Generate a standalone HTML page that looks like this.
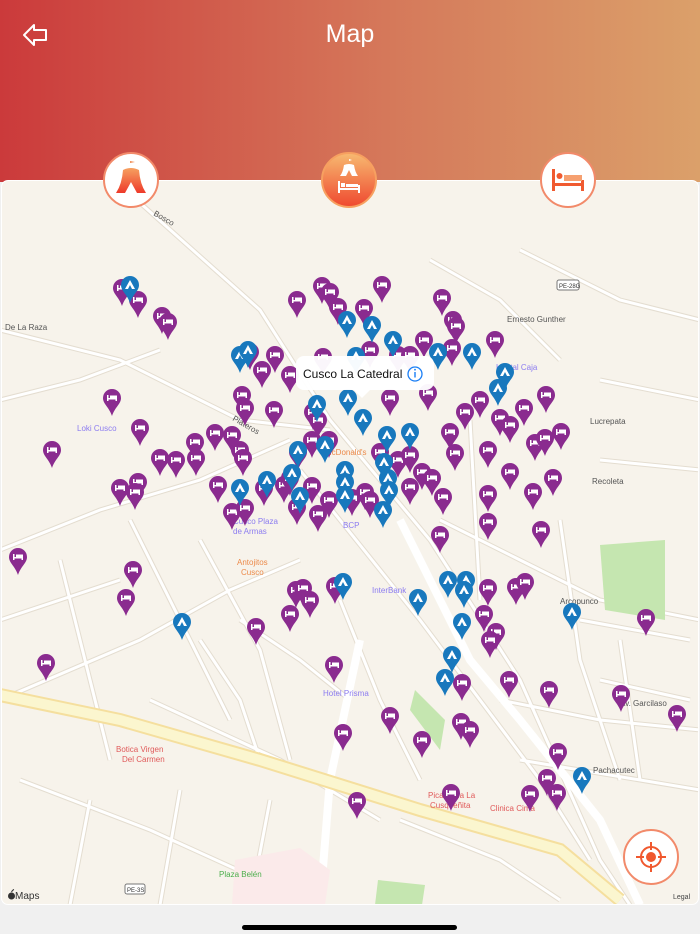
<!DOCTYPE html>
<html><head><meta charset="utf-8"><style>
*{margin:0;padding:0;box-sizing:border-box}
body{width:700px;height:934px;overflow:hidden;background:#f0f0f0;font-family:"Liberation Sans",sans-serif;position:relative}
#hdr{position:absolute;left:0;top:0;width:700px;height:182px;background:linear-gradient(90deg,#cb3a3b,#d5785a 55%,#dba06a)}
#title{position:absolute;top:20px;width:700px;text-align:center;color:#fff;font-size:25px}
#map{position:absolute;left:1px;top:180px;width:698px;height:725px;border-radius:7px;overflow:hidden;background:#f7f3eb;border:1px solid #fff}
.btn{position:absolute;width:56px;height:56px;border-radius:50%;background:#fff;border:2px solid #f28a6a;top:152px}
.home{position:absolute;left:242px;top:925px;width:215px;height:5px;border-radius:3px;background:#000}
</style></head><body>
<div id="hdr">
<svg style="position:absolute;left:22px;top:23px" width="26" height="24" viewBox="0 0 26 24"><path d="M2 12 L12 2 L12 7 L24 7 L24 17 L12 17 L12 22 Z" fill="none" stroke="#fff" stroke-width="2" stroke-linejoin="round"/></svg>
<div id="title">Map</div>
</div>
<div id="map">
<svg width="698" height="725" viewBox="1 180 698 725" style="position:absolute;left:-1px;top:-1px">
<defs>
<g id="pp"><path d="M-9,0 a9,9 0 1,1 18,0 c0,6 -6,9 -9,18 c-3,-9 -9,-12 -9,-18z" fill="#8a2b8f"/><rect x="-5" y="-3" width="1.5" height="6" fill="#fff"/><rect x="-5" y="0" width="10" height="1.5" fill="#fff"/><rect x="-2" y="-2.5" width="7" height="2.5" fill="#fff"/><rect x="3.5" y="0" width="1.5" height="3" fill="#fff"/></g>
<g id="bp"><path d="M-9,0 a9,9 0 1,1 18,0 c0,6 -6,9 -9,18 c-3,-9 -9,-12 -9,-18z" fill="#1878bd"/><path d="M-5,4 L0,-5 L5,4 L2,4 L0,0 L-2,4Z" fill="#fff"/></g>
<g id="st">
<path d="M120 185 L260 310 L330 420 L430 540 L520 680 L600 860 L630 905"/>
<path d="M300 470 L360 545 L420 620 L480 700 L540 780 L590 860"/>
<path d="M0 330 L120 360 L240 420 L330 430"/>
<path d="M0 550 L100 510 L200 480 L290 440"/>
<path d="M0 700 L140 640 L230 590 L300 560"/>
<path d="M440 520 L520 560 L600 600 L700 620"/>
<path d="M500 700 L600 720 L700 730"/>
<path d="M520 760 L700 790"/>
<path d="M560 520 L580 660 L620 780"/>
<path d="M470 420 L480 600"/>
<path d="M200 540 L260 650 L290 760"/>
<path d="M60 560 L90 680 L110 760"/>
<path d="M130 520 L180 620 L230 720"/>
<path d="M340 600 L380 700 L420 780"/>
<path d="M150 700 L280 760 L380 820"/>
<path d="M20 780 L150 830 L260 880"/>
<path d="M400 820 L500 860 L560 900"/>
<path d="M520 250 L620 300 L700 320"/>
<path d="M430 260 L500 300 L560 360"/>
<path d="M240 620 L300 660 L350 700"/>
<path d="M580 620 L690 640"/>
<path d="M600 680 L690 700"/>
<path d="M90 800 L70 905"/>
<path d="M180 790 L160 905"/>
<path d="M270 800 L250 905"/>
<path d="M0 400 L80 380 L160 350"/>
<path d="M0 620 L60 600 L120 580"/>
<path d="M200 640 L240 700 L260 760"/>
<path d="M600 380 L700 400"/>
<path d="M600 460 L700 470"/>
<path d="M620 640 L640 780"/>
</g>
</defs>
<use href="#st" stroke="#e4ddd0" stroke-width="5" fill="none"/>
<use href="#st" stroke="#fff" stroke-width="3" fill="none"/>
<path d="M360 640 L330 780 L320 905" stroke="#fff" stroke-width="8" fill="none"/>
<path d="M400 520 L440 600 L470 660 L520 720 L600 820 L640 905" stroke="#fff" stroke-width="8" fill="none"/>
<path d="M0 695 L120 720 L260 760 L420 810 L560 850 L620 900" stroke="#f5df9e" stroke-width="14" fill="none"/>
<path d="M0 695 L120 720 L260 760 L420 810 L560 850 L620 900" stroke="#fbf6cf" stroke-width="10" fill="none"/>
<path d="M600 545 L665 540 L665 620 L605 610Z" fill="#c5e6b0"/>
<path d="M415 690 L445 720 L440 750 L410 710Z" fill="#c5e6b0"/>
<path d="M378 880 L425 885 L422 905 L375 905Z" fill="#c5e6b0"/>
<path d="M235 860 L300 848 L330 870 L325 905 L232 905Z" fill="#fbeaea"/>
<g font-size="8" fill="#555" font-family="Liberation Sans,sans-serif">
<text x="153" y="215" transform="rotate(30 153 215)">Bosco</text>
<text x="232" y="420" transform="rotate(30 232 420)">Plateros</text>
<text x="560" y="604">Arcopunco</text>
<text x="620" y="706">Av. Garcilaso</text>
<text x="593" y="773">Pachacutec</text>
<text x="5" y="330">De La Raza</text>
<text x="507" y="322">Ernesto Gunther</text>
<text x="590" y="424">Lucrepata</text>
<text x="592" y="484">Recoleta</text>
</g>
<g font-size="8" fill="#8c7cf0" font-family="Liberation Sans,sans-serif">
<text x="77" y="431">Loki Cusco</text>
<text x="372" y="593">InterBank</text>
<text x="343" y="528">BCP</text>
<text x="323" y="696">Hotel Prisma</text>
<text x="496" y="370">Hostal Caja</text>
<text x="233" y="524">Cusco Plaza</text>
<text x="233" y="534">de Armas</text>
</g>
<g font-size="8" fill="#ec8a4a" font-family="Liberation Sans,sans-serif">
<text x="237" y="565">Antojitos</text><text x="241" y="575">Cusco</text>
<text x="325" y="455">McDonald's</text>
</g>
<g font-size="8" fill="#e05a5a" font-family="Liberation Sans,sans-serif">
<text x="116" y="752">Botica Virgen</text><text x="122" y="762">Del Carmen</text>
<text x="428" y="798">Picantería La</text><text x="430" y="808">Cusqueñita</text>
<text x="490" y="811">Clinica Cima</text>
</g>
<text x="219" y="877" font-size="8" fill="#4cae4c" font-family="Liberation Sans,sans-serif">Plaza Belén</text>
<rect x="125" y="884" width="20" height="10" rx="2" fill="#fff" stroke="#777"/><text x="127" y="892" font-size="6" fill="#333">PE-3S</text>
<rect x="557" y="280" width="22" height="10" rx="2" fill="#fff" stroke="#777"/><text x="559" y="288" font-size="6" fill="#333">PE-28G</text>
<g>
<use href="#pp" x="122" y="288"/><use href="#pp" x="138" y="300"/><use href="#pp" x="162" y="316"/><use href="#pp" x="168" y="322"/><use href="#pp" x="297" y="300"/><use href="#pp" x="322" y="286"/><use href="#pp" x="330" y="292"/><use href="#pp" x="382" y="285"/><use href="#pp" x="442" y="298"/><use href="#pp" x="338" y="307"/><use href="#pp" x="364" y="308"/><use href="#pp" x="453" y="320"/><use href="#pp" x="456" y="326"/><use href="#pp" x="495" y="340"/><use href="#pp" x="424" y="340"/><use href="#pp" x="250" y="352"/><use href="#pp" x="275" y="355"/><use href="#pp" x="262" y="370"/><use href="#pp" x="323" y="357"/><use href="#pp" x="370" y="350"/><use href="#pp" x="398" y="355"/><use href="#pp" x="410" y="355"/><use href="#pp" x="452" y="348"/><use href="#pp" x="242" y="395"/><use href="#pp" x="245" y="408"/><use href="#pp" x="274" y="410"/><use href="#pp" x="290" y="375"/><use href="#pp" x="313" y="412"/><use href="#pp" x="318" y="420"/><use href="#pp" x="390" y="398"/><use href="#pp" x="428" y="393"/><use href="#pp" x="465" y="412"/><use href="#pp" x="480" y="400"/><use href="#pp" x="500" y="418"/><use href="#pp" x="510" y="425"/><use href="#pp" x="524" y="408"/><use href="#pp" x="546" y="395"/><use href="#pp" x="112" y="398"/><use href="#pp" x="140" y="428"/><use href="#pp" x="52" y="450"/><use href="#pp" x="195" y="442"/><use href="#pp" x="215" y="433"/><use href="#pp" x="232" y="435"/><use href="#pp" x="160" y="458"/><use href="#pp" x="176" y="460"/><use href="#pp" x="196" y="458"/><use href="#pp" x="240" y="450"/><use href="#pp" x="243" y="458"/><use href="#pp" x="298" y="452"/><use href="#pp" x="312" y="440"/><use href="#pp" x="329" y="440"/><use href="#pp" x="450" y="432"/><use href="#pp" x="455" y="453"/><use href="#pp" x="488" y="450"/><use href="#pp" x="535" y="443"/><use href="#pp" x="545" y="438"/><use href="#pp" x="561" y="432"/><use href="#pp" x="380" y="452"/><use href="#pp" x="398" y="460"/><use href="#pp" x="410" y="455"/><use href="#pp" x="422" y="472"/><use href="#pp" x="432" y="478"/><use href="#pp" x="218" y="485"/><use href="#pp" x="120" y="488"/><use href="#pp" x="138" y="482"/><use href="#pp" x="135" y="492"/><use href="#pp" x="264" y="488"/><use href="#pp" x="284" y="485"/><use href="#pp" x="290" y="478"/><use href="#pp" x="312" y="486"/><use href="#pp" x="329" y="500"/><use href="#pp" x="352" y="498"/><use href="#pp" x="365" y="492"/><use href="#pp" x="370" y="500"/><use href="#pp" x="410" y="487"/><use href="#pp" x="443" y="497"/><use href="#pp" x="488" y="494"/><use href="#pp" x="510" y="472"/><use href="#pp" x="553" y="478"/><use href="#pp" x="533" y="492"/><use href="#pp" x="297" y="507"/><use href="#pp" x="318" y="514"/><use href="#pp" x="232" y="512"/><use href="#pp" x="245" y="508"/><use href="#pp" x="440" y="535"/><use href="#pp" x="488" y="522"/><use href="#pp" x="541" y="530"/><use href="#pp" x="18" y="557"/><use href="#pp" x="133" y="570"/><use href="#pp" x="126" y="598"/><use href="#pp" x="296" y="590"/><use href="#pp" x="303" y="588"/><use href="#pp" x="310" y="600"/><use href="#pp" x="335" y="586"/><use href="#pp" x="290" y="614"/><use href="#pp" x="488" y="588"/><use href="#pp" x="516" y="587"/><use href="#pp" x="525" y="582"/><use href="#pp" x="484" y="614"/><use href="#pp" x="496" y="632"/><use href="#pp" x="490" y="640"/><use href="#pp" x="256" y="627"/><use href="#pp" x="646" y="618"/><use href="#pp" x="46" y="663"/><use href="#pp" x="334" y="665"/><use href="#pp" x="462" y="683"/><use href="#pp" x="509" y="680"/><use href="#pp" x="549" y="690"/><use href="#pp" x="621" y="694"/><use href="#pp" x="677" y="714"/><use href="#pp" x="343" y="733"/><use href="#pp" x="390" y="716"/><use href="#pp" x="422" y="740"/><use href="#pp" x="461" y="722"/><use href="#pp" x="470" y="730"/><use href="#pp" x="558" y="752"/><use href="#pp" x="547" y="778"/><use href="#pp" x="557" y="793"/><use href="#pp" x="530" y="794"/><use href="#pp" x="451" y="793"/><use href="#pp" x="357" y="801"/>
<use href="#bp" x="130" y="285"/><use href="#bp" x="240" y="355"/><use href="#bp" x="248" y="350"/><use href="#bp" x="347" y="320"/><use href="#bp" x="372" y="325"/><use href="#bp" x="393" y="340"/><use href="#bp" x="438" y="352"/><use href="#bp" x="472" y="352"/><use href="#bp" x="498" y="388"/><use href="#bp" x="505" y="372"/><use href="#bp" x="363" y="418"/><use href="#bp" x="348" y="398"/><use href="#bp" x="387" y="435"/><use href="#bp" x="410" y="432"/><use href="#bp" x="317" y="404"/><use href="#bp" x="298" y="450"/><use href="#bp" x="325" y="445"/><use href="#bp" x="292" y="473"/><use href="#bp" x="240" y="488"/><use href="#bp" x="267" y="480"/><use href="#bp" x="300" y="496"/><use href="#bp" x="345" y="470"/><use href="#bp" x="345" y="482"/><use href="#bp" x="345" y="495"/><use href="#bp" x="384" y="462"/><use href="#bp" x="383" y="510"/><use href="#bp" x="388" y="478"/><use href="#bp" x="389" y="490"/><use href="#bp" x="448" y="580"/><use href="#bp" x="466" y="580"/><use href="#bp" x="464" y="590"/><use href="#bp" x="418" y="598"/><use href="#bp" x="462" y="622"/><use href="#bp" x="452" y="655"/><use href="#bp" x="445" y="678"/><use href="#bp" x="182" y="622"/><use href="#bp" x="343" y="582"/><use href="#bp" x="572" y="612"/><use href="#bp" x="582" y="776"/><use href="#bp" x="356" y="356"/>
</g>
<path d="M296 364 a8 8 0 0 1 8 -8 H426 a8 8 0 0 1 8 8 V382 a8 8 0 0 1 -8 8 H370 L362 398 L354 390 H304 a8 8 0 0 1 -8 -8Z" fill="#fff" opacity="0.96"/>
<text x="303" y="378" font-size="12" fill="#111" font-family="Liberation Sans,sans-serif">Cusco La Catedral</text>
<circle cx="415" cy="374" r="7" fill="none" stroke="#1a7ef5" stroke-width="1.3"/><rect x="414.3" y="372" width="1.4" height="5.5" fill="#1a7ef5"/><circle cx="415" cy="369.7" r="0.9" fill="#1a7ef5"/>
<circle cx="11.5" cy="896" r="3.5" fill="#333"/><path d="M11.5 892 q1 -2 2.5 -2.5" stroke="#333" stroke-width="1" fill="none"/>
<text x="15" y="899" font-size="10" fill="#333" font-family="Liberation Sans,sans-serif">Maps</text>
<text x="673" y="899" font-size="7" fill="#444" font-family="Liberation Sans,sans-serif">Legal</text>
</svg>
<div style="position:absolute;left:621px;top:648px;width:56px;height:56px;border-radius:50%;background:#fff;border:2px solid #f28a6a">
<svg width="52" height="52" viewBox="0 0 52 52"><circle cx="26" cy="26" r="10" fill="none" stroke="#f0582e" stroke-width="2"/><circle cx="26" cy="26" r="5" fill="#f0582e"/><path d="M26 11V19M26 33V41M11 26H19M33 26H41" stroke="#f0582e" stroke-width="2"/></svg>
</div>
</div>
<div class="btn" style="left:103px"><svg width="52" height="52" viewBox="0 0 52 52"><defs><linearGradient id="g1" x1="0" y1="0" x2="0" y2="1"><stop offset="0" stop-color="#f6a060"/><stop offset="1" stop-color="#ee3a2a"/></linearGradient></defs><path d="M25 12 L25 7 L30 8 L25 9" fill="#f08a50"/><path d="M18 16 Q26 12 34 16 Q35 30 41 39 L32 39 L26 28 L20 39 L11 39 Q17 30 18 16Z" fill="url(#g1)"/></svg></div>
<div class="btn" style="left:321px;background:linear-gradient(#f7b870,#ef4a30);border-color:#f7a060"><svg width="52" height="52" viewBox="0 0 52 52"><path d="M26 8V5l3 1-3 1M21 11 Q26 9 31 11 Q32 18 35 22 L29 22 L26 16 L23 22 L17 22 Q20 18 21 11Z" fill="#fff"/><rect x="15" y="27" width="2" height="12" fill="#fff"/><rect x="35" y="31" width="2" height="8" fill="#fff"/><rect x="15" y="34" width="22" height="2" fill="#fff"/><rect x="18" y="29" width="4" height="4" fill="#fff"/><rect x="23" y="30" width="12" height="3" fill="#fff"/></svg></div>
<div class="btn" style="left:540px"><svg width="52" height="52" viewBox="0 0 52 52"><g fill="#f05a30"><rect x="10" y="15" width="3" height="22"/><rect x="39" y="26" width="3" height="11"/><rect x="10" y="29" width="32" height="3"/><circle cx="17.5" cy="22" r="3"/><rect x="22" y="21" width="18" height="6" fill="#f6a070"/></g></svg></div>
<div class="home"></div>
</body></html>
